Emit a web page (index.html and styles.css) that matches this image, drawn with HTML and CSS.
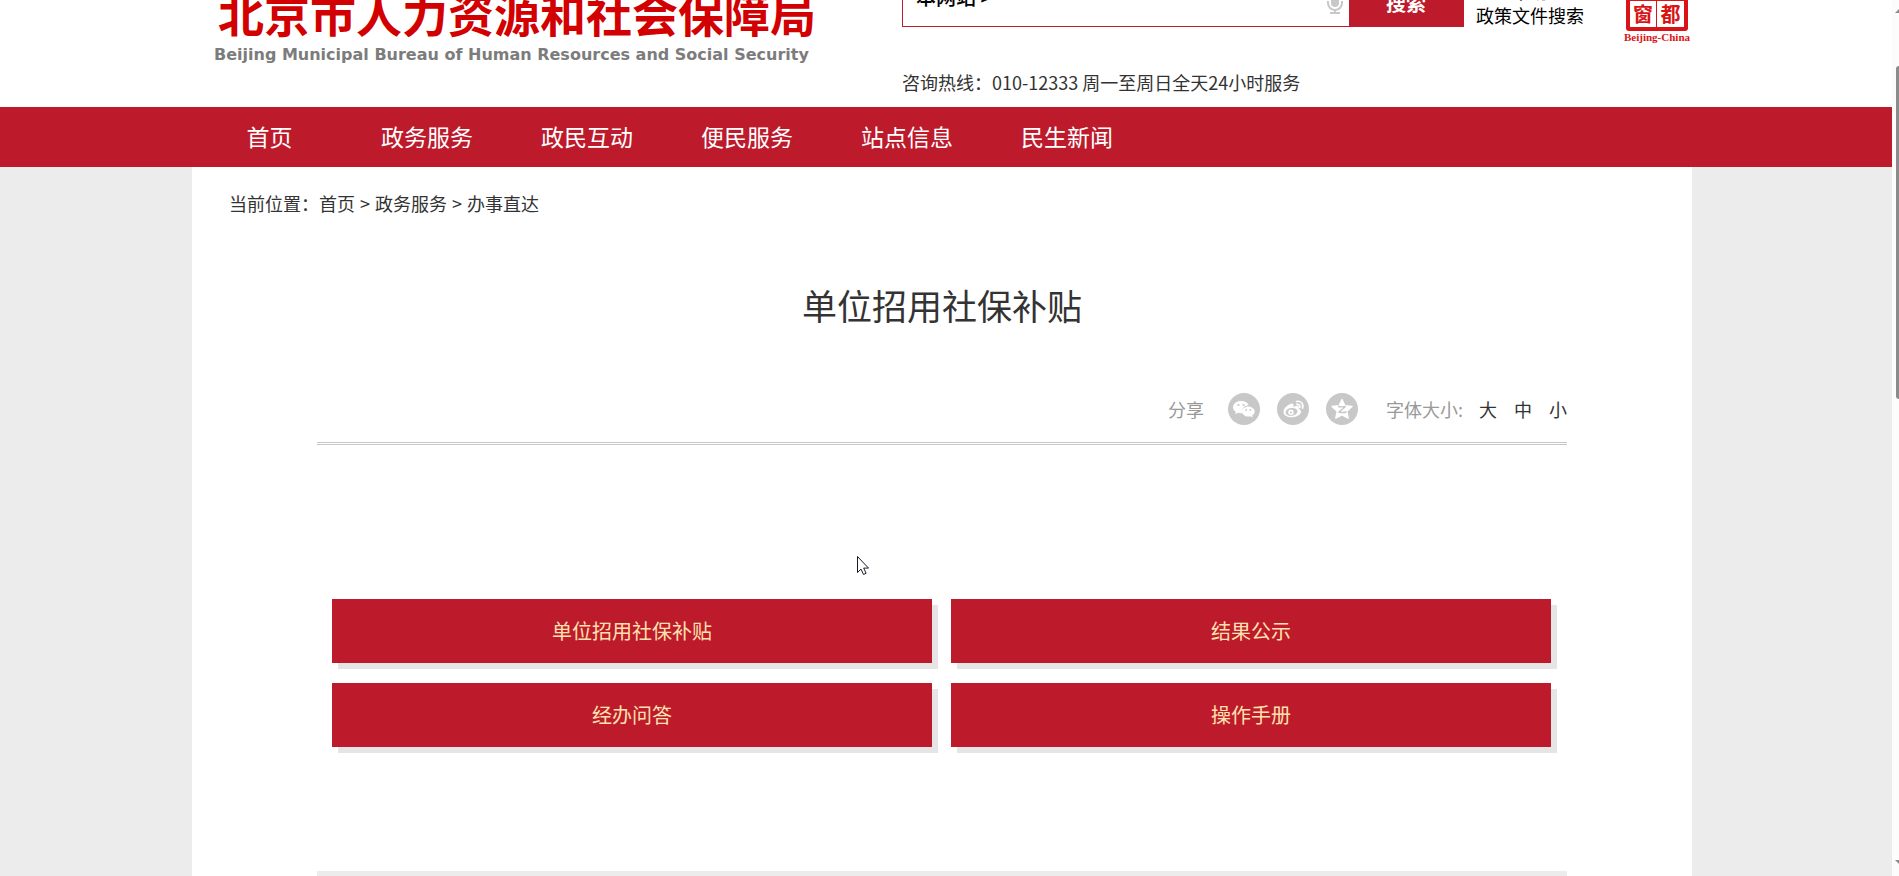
FILE: index.html
```html
<!DOCTYPE html>
<html lang="zh-CN">
<head>
<meta charset="utf-8">
<title>单位招用社保补贴</title>
<link rel="stylesheet" href="styles.css">
</head>
<body>
<div class="page">
  <header class="header">
    <div class="wrap header-row">
      <div class="logo">
        <div class="logo-cn">北京市人力资源和社会保障局</div>
        <div class="logo-en">Beijing Municipal Bureau of Human Resources and Social Security</div>
      </div>
      <div class="search-area">
        <form class="search">
          <label class="scope" for="q">本网站 &gt;</label>
          <input class="query" id="q" type="text">
          <svg class="mic" viewBox="0 0 16 24" width="16" height="24"><rect x="4" y="0" width="8" height="17" rx="4" fill="#c8c8c8"/><path d="M1 11v2a7 7 0 0 0 14 0v-2M8 20v3M3 23h10" fill="none" stroke="#c8c8c8" stroke-width="2"/></svg>
          <button class="search-btn" type="button">搜索</button>
        </form>
        <p class="hotline">咨询热线：010-12333 周一至周日全天24小时服务</p>
      </div>
      <div class="search-links"><a href="#">帮助</a><a href="#">政策文件搜索</a></div>
      <div class="window-logo">
        <div class="seal"><span>首</span><span>都</span><span>窗</span><span>都</span></div>
        <div class="seal-name">Beijing-China</div>
      </div>
    </div>
  </header>
  <nav class="nav">
    <div class="wrap nav-row">
      <a class="home" href="#">首页</a><a href="#">政务服务</a><a href="#">政民互动</a><a href="#">便民服务</a><a href="#">站点信息</a><a href="#">民生新闻</a>
    </div>
  </nav>
  <div class="body">
  <main class="wrap content">
    <div class="crumbs"><span>当前位置：</span><a href="#">首页</a><i>&gt;</i><a href="#">政务服务</a><i>&gt;</i><a href="#">办事直达</a></div>
    <article class="article">
      <h1>单位招用社保补贴</h1>
      <div class="tools">
        <span class="share-label">分享</span>
        <div class="share">
          <button type="button" aria-label="微信"><svg viewBox="0 0 32 32"><path fill="#fff" d="M13 8c-4.400 0-8 2.700-8 6.200 0 2 1.200 3.600 2.900 4.700L7 21.200l3-1.400c1 .3 2 .5 3 .5.600 0 .900 0 1.400-.1-1.300-4.400 2.300-8 6.300-7.900C19.900 9.800 16.800 8 13 8z"/><path fill="#fff" d="M20.300 13.400c-3.600 0-6.300 2.300-6.300 5.100s2.800 5.100 6.300 5.100c.8 0 1.500-.1 2.200-.3l2.300 1.200-.6-2c1.500-.9 2.500-2.300 2.500-4 0-2.800-2.900-5.100-6.400-5.100z"/><g fill="#c8c8c8"><circle cx="10.500" cy="12" r="1.100"/><circle cx="15.500" cy="12" r="1.100"/><circle cx="18.200" cy="17" r=".9"/><circle cx="22.400" cy="17" r=".9"/></g></svg></button>
          <button type="button" aria-label="微博"><svg viewBox="0 0 32 32"><path fill="#fff" d="M22.300 16c-.6-.2-.8-.3-.6-1 .9-2.300-1.500-2.900-5-1.300-.5.200-.5 0-.4-.5 1-3-1.300-3.200-4.200-1.600-3.200 1.800-5.600 4.700-5.600 7.300 0 3.500 4 5.300 8 5.300 5.200 0 9.500-2.600 9.500-5.500 0-1.400-.6-2.300-1.700-2.700z"/><ellipse cx="14.500" cy="18.900" rx="6" ry="3.900" fill="#c8c8c8" transform="rotate(-8 14.500 18.900)"/><circle cx="14" cy="19.300" r="2.700" fill="#fff"/><circle cx="14" cy="19.500" r="1" fill="#c8c8c8"/><path fill="none" stroke="#fff" stroke-width="1.600" stroke-linecap="round" d="M19.500 8.600c4-1.200 7.500 2 6 6.600M19.800 11.400c2.200-.5 3.600 1.200 2.900 3"/></svg></button>
          <button type="button" aria-label="QQ空间"><svg viewBox="0 0 32 32"><path fill="#fff" stroke="#fff" stroke-width="1.400" stroke-linejoin="round" d="M16 6.500l2.900 6.200 7.100.800-5.200 4.800 1.400 6.900L16 21.800l-6.200 3.400 1.400-6.900L6 13.500l7.100-.8z"/><path d="M12 13.500q4 .8 7.500 0L13 19q3.500 1 7.500 0" fill="none" stroke="#c8c8c8" stroke-width="1.400"/></svg></button>
        </div>
        <span class="size-label">字体大小:</span>
        <div class="sizes"><button type="button">大</button><button type="button">中</button><button type="button">小</button></div>
      </div>
      <div class="links">
        <a href="#">单位招用社保补贴</a><a href="#">结果公示</a><a href="#">经办问答</a><a href="#">操作手册</a>
      </div>
      <div class="footer-bar"></div>
    </article>
  </main>
  </div>
</div>
<div class="scrollbar">
  <svg viewBox="0 0 7 4" width="7" height="4"><path d="M3 4L7 0V4z" fill="#8b8b8b"/></svg>
  <div class="thumb"></div>
  <svg class="down" viewBox="0 0 7 4" width="7" height="4"><path d="M3 0L7 4V0z" fill="#8b8b8b"/></svg>
</div>
<svg class="cursor" viewBox="0 0 13 20" width="13" height="20"><path d="M.5.500v16l3.500-3.400 2.500 5.400 2.600-1.200-2.400-5.200H11.500z" fill="#fff" stroke="#1b1b28" stroke-width="1"/></svg>
</body>
</html>
```
FILE: styles.css
```css
* { box-sizing: border-box; }
body {
  margin: 0;
  display: flex;
  height: 100vh;
  overflow: hidden;
  background: #ececec;
  color: #333;
  font-family: "Noto Sans CJK SC", sans-serif;
  font-size: 18px;
  line-height: 24px;
}
a { color: inherit; text-decoration: none; }
button { border: 0; padding: 0; background: none; color: inherit; font: inherit; }
p, h1 { margin: 0; font-weight: 400; }
.page { flex: 1; min-width: 0; display: flex; flex-direction: column; }
.wrap { width: 100%; max-width: 1500px; margin: 0 auto; }
.header, .nav, .body { padding-right: 8px; }

.header { margin-top: -40px; height: 147px; flex: none; background: #fff; }
.header-row { display: flex; align-items: flex-start; }
.logo { width: 710px; padding: 24px 0 0 26px; white-space: nowrap; }
.logo-cn { font-size: 46px; line-height: 56px; font-weight: 700; color: #d20000; }
.logo-en { padding-top: 4px; margin-left: -4px; font: 700 16px/22px "DejaVu Sans", sans-serif; color: #7c7c7c; }
.search { display: flex; align-items: center; width: 562px; height: 50px; margin-top: 17px; border: 1px solid #bd1a2b; background: #fff; }
.scope { padding: 0 0 10px 13px; font-size: 20px; font-weight: 500; color: #000; }
.query { flex: 1; min-width: 0; border: 0; outline: 0; font: inherit; }
.mic { margin-right: 6px; }
.search-btn { width: 114px; height: 50px; padding-top: 2px; background: #bd1a2b; color: #fff; font-size: 20px; font-weight: 700; }
.hotline { padding-top: 43px; }
.search-links { display: flex; flex-direction: column; align-items: center; margin-left: 12px; padding-top: 19px; color: #000; }
.window-logo { width: 70px; margin-left: 38px; padding-top: 10px; color: #d81416; }
.seal {
  display: grid;
  grid-template-columns: 1fr 1fr;
  width: 62px;
  margin: 0 auto;
  border: 4px solid #d81416;
  border-radius: 3px;
  font-size: 20px;
  font-weight: 700;
  line-height: 26px;
  text-align: center;
}
.seal span { border-bottom: 1px solid #d81416; }
.seal span:nth-child(odd) { border-right: 1px solid #d81416; }
.seal span:nth-child(n+3) { border-bottom: 0; }
.seal-name { font: 700 11px/12px "Liberation Serif", serif; text-align: center; }

.nav { flex: none; background: #bd1a2b; color: #fff; font-size: 23px; }
.nav-row { display: flex; }
.nav a { width: 160px; padding-bottom: 2px; line-height: 58px; text-align: center; }
.nav .home { width: 155px; }

.body { flex: 1; display: flex; min-height: 0; }
.content { background: #fff; }
.crumbs { display: flex; padding: 24px 37px 0; }
.crumbs i { width: 20px; font-style: normal; text-align: center; }
.article { max-width: 1250px; margin: 0 auto; }
h1 { padding-top: 64px; font-size: 35px; line-height: 52px; text-align: center; }
.tools { display: flex; align-items: center; justify-content: flex-end; margin-top: 62px; padding-bottom: 17px; border-bottom: 3px double #c8c8c8; color: #999; }
.share { display: flex; gap: 17px; margin: 0 28px 0 24px; }
.share button { width: 32px; height: 32px; border-radius: 50%; background: #c8c8c8; }
.share svg { display: block; }
.sizes { display: flex; gap: 17px; margin-left: 16px; color: #333; }
.links { display: grid; grid-template-columns: 1fr 1fr; gap: 20px 19px; padding: 154px 16px 0 15px; }
.links a { background: #bd1a2b; box-shadow: 6px 6px 0 #e5e5e5; color: #ffe2b0; font-size: 20px; line-height: 64px; text-align: center; }
.footer-bar { height: 5px; margin-top: 124px; background: #ececec; }

.scrollbar { width: 7px; padding: 9px 0 12px; display: flex; flex-direction: column; background: #fcfcfc; }
.thumb { width: 3px; height: 38vh; margin: 53px 0 0 4px; border-radius: 3px 0 0 3px; background: #8b8b8b; }
.down { margin-top: auto; }
.cursor { position: absolute; left: 857px; top: 556px; }
```
